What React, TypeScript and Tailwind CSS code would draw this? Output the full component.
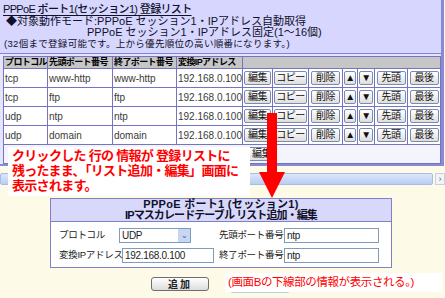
const rows = [
  ["tcp", "www-http", "www-http", "192.168.0.100"],
  ["tcp", "ftp", "ftp", "192.168.0.100"],
  ["udp", "ntp", "ntp", "192.168.0.100"],
  ["udp", "domain", "domain", "192.168.0.100"],
];

const dataCols = ["w-[44px]", "w-[65px]", "w-[64px]", "w-[66px]"];

const btn =
  "flex h-[14px] items-center justify-center whitespace-nowrap rounded-[2px] border border-[#7b8bb0] bg-[linear-gradient(#ffffff,#dedede)] text-[10px] leading-none text-[#111] tracking-[-0.5px]";

function RowButtons() {
  const items: [string, string, string][] = [
    ["編集", "w-[30px]", "w-[27px]"],
    ["コピー", "w-[36px]", "w-[33px]"],
    ["削除", "w-[34px]", "w-[29px]"],
    ["▲", "w-[15px]", "w-[12px]"],
    ["▼", "w-[17px]", "w-[14px]"],
    ["先頭", "w-[33px]", "w-[29px]"],
    ["最後", "w-[33px]", "w-[29px]"],
  ];
  return (
    <>
      {items.map(([label, cell, b]) => (
        <div key={label} className={`${cell} flex h-full items-center justify-center border-l border-[#7474c4]`}>
          <div className={`${btn} ${b}`}>{label}</div>
        </div>
      ))}
    </>
  );
}

export default function App() {
  return (
    <div className="relative h-[298px] w-[445px] overflow-hidden bg-[#fdfbe8] font-['Liberation_Sans','Noto_Sans_CJK_JP',sans-serif] text-[#10102a]">
      {/* registration list panel */}
      <div className="w-[444px] border-r-[3px] border-b-[2px] border-[#8a8ad4] bg-[#e4e4fc]">
        <div className="h-[54px] whitespace-nowrap border-b border-[#8484cc] bg-[#d6d6fe] pl-[3px]">
          <div className="pt-[3px] text-[11px] leading-[13px] font-medium tracking-[-0.65px] underline underline-offset-[2px]">
            PPPoE ポート1(セッション1) 登録リスト
          </div>
          <div className="pl-[3px] text-[11px] leading-[11px] tracking-[0px]">
            ◆対象動作モード:PPPoE セッション1・IPアドレス自動取得
          </div>
          <div className="pl-[84px] text-[11px] leading-[11px] tracking-[0px]">
            PPPoE セッション1・IPアドレス固定(1〜16個)
          </div>
          <div className="pl-[1px] text-[9.5px] leading-[12px] tracking-[0.3px]">
            (32個まで登録可能です。上から優先順位の高い順番になります。)
          </div>
        </div>
        <div className="ml-[3px] mt-[2px] w-[438px] border-t border-r border-[#7474c4] bg-white">
          <div className="flex h-[12px] whitespace-nowrap border-b border-[#7474c4] bg-[#c6c6c6] text-[9px] leading-[11px] font-bold tracking-[-0.6px] text-black">
            <div className="w-[44px] overflow-hidden border-l border-[#7474c4] pl-[1px]">プロトコル</div>
            <div className="w-[65px] overflow-hidden border-l border-[#7474c4] pl-[1px]">先頭ポート番号</div>
            <div className="w-[64px] overflow-hidden border-l border-[#7474c4] pl-[1px]">終了ポート番号</div>
            <div className="w-[66px] overflow-hidden border-l border-[#7474c4] pl-[1px]">変換IPアドレス</div>
            <div className="flex-1 border-l border-[#7474c4]" />
          </div>
          {rows.map((r, i) => (
            <div key={i} className="flex h-[19px] border-b border-[#7474c4] text-[10px] text-[#3a3a3a]">
              {r.map((c, j) => (
                <div key={j} className={`${dataCols[j]} flex items-center border-l border-[#7474c4] pl-[1px]`}>
                  {c}
                </div>
              ))}
              <RowButtons />
            </div>
          ))}
          <div className="flex h-[19px] items-center border-b border-l border-[#7474c4] bg-[#f4f4fc] pl-[200px]">
            <div className={`${btn} w-[70px] justify-end pr-[2px]`}>編集</div>
          </div>
        </div>
      </div>

      {/* horizontal scrollbar */}
      <div className="mt-[7px] flex h-[12px] items-center">
        <div className="h-full flex-1 rounded-[2px] border border-[#a8bce8] bg-[linear-gradient(#dce6fb,#b9cdf3)]" />
        <div className="ml-[2px] flex h-full w-[10px] items-center justify-center border border-[#c8d0e0] bg-[#f4f4f8] text-[9px] leading-none text-[#5060a0]">
          ›
        </div>
      </div>

      {/* add / edit form */}
      <div className="ml-[50px] mt-[13px] w-[342px] border border-[#8080c4] bg-white">
        <div className="flex h-[23px] flex-col items-center justify-center whitespace-nowrap border-b border-[#8080c4] bg-[#d8d8fa] text-[11px] leading-[11px] font-bold text-[#10102a]">
          <div className="tracking-[0.3px]">PPPoE ポート1 (セッション1)</div>
          <div className="tracking-[-0.9px]">IPマスカレードテーブル リスト追加・編集</div>
        </div>
        <div className="flex flex-col gap-[5px] whitespace-nowrap pb-[4px] pl-[8px] pt-[6px] text-[9.5px] tracking-[-0.3px] text-[#222]">
          <div className="flex h-[15px] items-center">
            <div className="w-[60px]">プロトコル</div>
            <div className="flex h-full w-[72px] items-center border border-[#7f9db9] bg-white text-[10px]">
              <div className="flex-1 pl-[2px]">UDP</div>
              <div className="flex h-full w-[12px] items-center justify-center bg-[#c7d6f4] text-[8px] text-[#4d6185]">⌄</div>
            </div>
            <div className="ml-[28px] w-[65px]">先頭ポート番号</div>
            <div className="flex h-full w-[95px] items-center border border-[#7f9db9] pl-[2px] text-[10px]">ntp</div>
          </div>
          <div className="flex h-[15px] items-center">
            <div className="w-[63px]">変換IPアドレス</div>
            <div className="flex h-full w-[92px] items-center border border-[#7f9db9] pl-[2px] text-[10px]">192.168.0.100</div>
            <div className="ml-[5px] w-[65px]">終了ポート番号</div>
            <div className="flex h-full w-[95px] items-center border border-[#7f9db9] pl-[2px] text-[10px]">ntp</div>
          </div>
        </div>
      </div>

      <div className="mt-[9px] flex pl-[151px]">
        <div className="flex h-[14px] w-[58px] items-center justify-center rounded-[3px] border border-[#6e6e6e] bg-[linear-gradient(#ffffff,#dcdcdc)] text-[10px] font-bold tracking-[2px] text-[#222]">
          追加
        </div>
        <div className="ml-[21px] h-[16px] w-[60px] rounded-[3px] bg-[#c3ccdc]" />
      </div>

      {/* annotations */}
      <div className="absolute left-[8px] top-[147px] h-[49px] w-[242px] whitespace-nowrap bg-white pl-[4px] pt-[1px] text-[13px] leading-[15px] font-bold tracking-[-0.7px] text-[#ff0000]">
        クリックした 行の 情報が 登録リストに
        <br />
        残ったまま、「リスト追加・編集」画面に
        <br />
        表示されます。
      </div>
      <svg className="absolute left-[258px] top-[113px]" width="28" height="86" viewBox="0 0 28 86">
        <rect x="9" y="0" width="10" height="61" fill="#ff0000" />
        <polygon points="1,59 27,59 14,85" fill="#ff0000" />
      </svg>
      <div className="absolute left-[225px] top-[273px] h-[19px] w-[217px] whitespace-nowrap bg-white pl-[3px] pt-[2px] text-[11.5px] leading-[14px] tracking-[-0.4px] text-[#ff0000]">
        (画面Bの下線部の情報が表示される。)
      </div>
    </div>
  );
}
